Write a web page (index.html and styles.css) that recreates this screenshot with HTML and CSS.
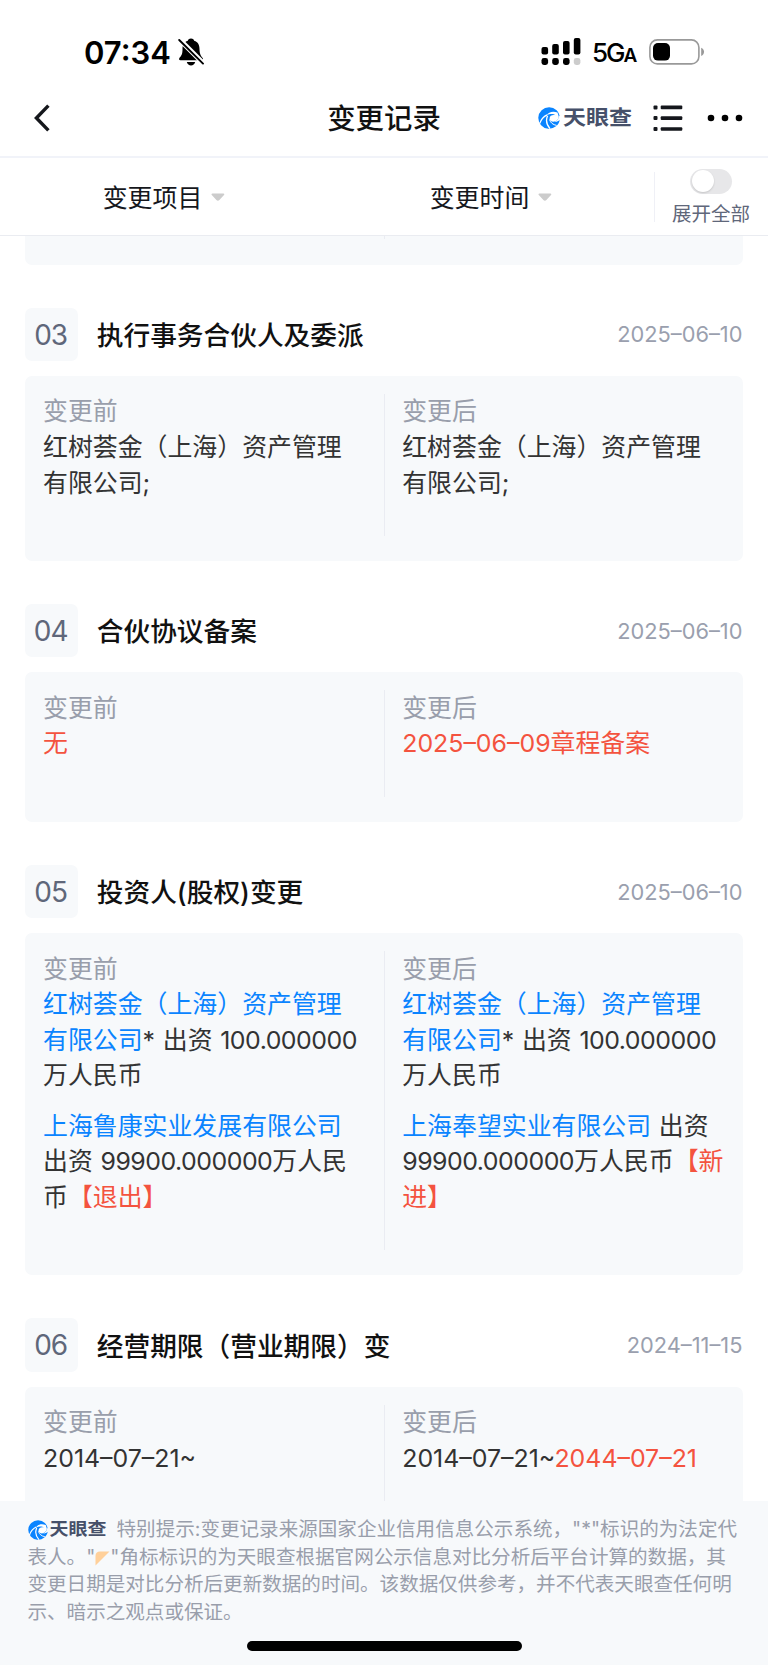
FILE: index.html
```html
<!DOCTYPE html>
<html lang="zh-CN">
<head>
    <meta charset="UTF-8">
    <meta name="viewport" content="width=device-width, initial-scale=1.0">
    <title>变更记录</title>
    <link rel="stylesheet" href="styles.css">
</head>
<body>
    <svg class="defs" width="0" height="0">
        <symbol id="swirl" viewBox="0 0 22 22">
            <path d="M18.6 3.2 A10.8 10.8 0 1 0 18 19.3 C20 17.6 21.4 15.4 21.7 13 C20 14.6 18 15 16.6 14.6 C19.6 13.6 20.8 11.6 20.4 9.4 L21.6 9 C21.2 6.8 20.2 4.8 18.6 3.2 Z" fill="#0a84ff"/>
            <path d="M19.5 5.6 C15 3.8 10.5 5 8.6 8.4 C11.6 6.6 15.6 6.6 17.4 8.2 C14.6 7.4 11.8 8.6 11.6 11.2 C11.4 13.4 13.6 15.2 16.6 14.6 C19.4 13.6 20.8 11.6 20.6 9 Z" fill="#fff"/>
            <path d="M9 7.8 C5.4 9.6 3 12.6 1.6 16.6 M9.6 8.8 C7.8 12.8 8.8 18 12 21.6" fill="none" stroke="#fff" stroke-width="1.3"/>
            <path d="M11.5 12.5 C12.5 15.8 15 17.8 18.6 18.4" fill="none" stroke="#fff" stroke-width="1"/>
        </symbol>
    </svg>

    <div class="page">
        <!-- status bar -->
        <div class="status">
            <div class="status-left">
                <span class="time">07:34</span>
                <svg class="bell" width="26" height="28" viewBox="0 0 26 28">
                    <path d="M13 0.5 C15 0.5 16 1.6 16.2 2.8 C20 4 21.5 7 21.5 11 C21.5 16 23 18 25 20.5 C25 22 24.5 22.3 23.5 22.3 H2.5 C1 22.3 0.7 21 1.5 19.8 C3.5 17.5 4.5 16 4.5 11 C4.5 7 6 4 9.8 2.8 C10 1.6 11 0.5 13 0.5 Z" fill="#000"/>
                    <path d="M8.8 24 H17.2 C16.6 26.2 15 27.4 13 27.4 S9.4 26.2 8.8 24 Z" fill="#000"/>
                    <path d="M1 1 L25.5 25.5" stroke="#fff" stroke-width="5"/>
                    <path d="M1.2 2 L25 25.6" stroke="#000" stroke-width="1.9" stroke-linecap="round"/>
                </svg>
            </div>
            <div class="status-right">
                <svg width="40" height="28" viewBox="0 0 40 28">
                    <rect x="0.5" y="9" width="6.6" height="7.5" rx="2"/>
                    <rect x="11.2" y="6" width="6.6" height="10.5" rx="2"/>
                    <rect x="22" y="3" width="6.6" height="13.5" rx="2"/>
                    <rect x="32.8" y="0" width="6.6" height="16.5" rx="2"/>
                    <rect x="0.5" y="20" width="6.6" height="7" rx="2.4"/>
                    <rect x="11.2" y="20" width="6.6" height="7" rx="2.4"/>
                    <rect x="22" y="20" width="6.6" height="7" rx="2.4"/>
                    <rect x="32.8" y="20" width="6.6" height="7" rx="2.4" fill="#ccc"/>
                </svg>
                <span class="net">5G<small>A</small></span>
                <svg width="56" height="26" viewBox="0 0 56 26">
                    <rect x="0.9" y="0.9" width="49" height="24" rx="7.5" fill="none" stroke="#999" stroke-width="1.6"/>
                    <rect x="4" y="4" width="17" height="17.6" rx="5"/>
                    <path d="M52.2 8.8 C56 10.5 56 15.3 52.2 17 Z" fill="#999"/>
                </svg>
            </div>
        </div>

        <!-- nav -->
        <div class="nav">
            <div class="nav-left">
                <svg width="16" height="28" viewBox="0 0 16 28">
                    <path d="M14.4 1.6 L2.4 14 L14.4 26.4" fill="none" stroke="#15171c" stroke-width="3.4"/>
                </svg>
            </div>
            <h1 class="nav-title">变更记录</h1>
            <div class="nav-right">
                <span class="brand"><svg width="22" height="22"><use href="#swirl"/></svg><b>天眼查</b></span>
                <svg class="menu" width="30" height="28" viewBox="0 0 30 28">
                    <g fill="#15171c">
                        <rect x="0.5" y="1.5" width="4" height="4" rx="1"/>
                        <rect x="0.5" y="12" width="4" height="4" rx="1"/>
                        <rect x="0.5" y="23" width="4" height="4" rx="1"/>
                        <rect x="7.7" y="1.6" width="21.6" height="3.6" rx="1"/>
                        <rect x="7.7" y="12.3" width="21.6" height="3.6" rx="1"/>
                        <rect x="7.7" y="23.2" width="21.6" height="3.6" rx="1"/>
                    </g>
                </svg>
                <svg class="more" width="36" height="8" viewBox="0 0 36 8">
                    <circle cx="4" cy="4" r="3.3"/>
                    <circle cx="18" cy="4" r="3.3"/>
                    <circle cx="32" cy="4" r="3.3"/>
                </svg>
            </div>
        </div>

        <!-- filter -->
        <div class="filter">
            <div class="filter-item"><span>变更项目</span><svg width="14" height="9" viewBox="0 0 14 9"><path d="M1.4 0.6 H12.4 C13.4 0.6 13.6 1.4 13 2 L8.4 7 C7.4 8 6.4 8 5.4 7 L0.8 2 C0.2 1.4 0.5 0.6 1.4 0.6 Z" fill="#ccc"/></svg></div>
            <div class="filter-item"><span>变更时间</span><svg width="14" height="9" viewBox="0 0 14 9"><path d="M1.4 0.6 H12.4 C13.4 0.6 13.6 1.4 13 2 L8.4 7 C7.4 8 6.4 8 5.4 7 L0.8 2 C0.2 1.4 0.5 0.6 1.4 0.6 Z" fill="#ccc"/></svg></div>
            <div class="expand">
                <span class="switch"></span>
                <span>展开全部</span>
            </div>
        </div>

        <!-- list -->
        <div class="list">
            <div class="box box-prev"><div class="col"></div><div class="col"></div></div>

            <div class="item">
                <div class="item-head">
                    <span class="num">03</span>
                    <h2>执行事务合伙人及委派</h2>
                    <span class="date">2025–06–10</span>
                </div>
                <div class="box">
                    <div class="col">
                        <p class="label">变更前</p>
                        <p>红树荟金（上海）资产管理<br>有限公司;</p>
                    </div>
                    <div class="col">
                        <p class="label">变更后</p>
                        <p>红树荟金（上海）资产管理<br>有限公司;</p>
                    </div>
                </div>
            </div>

            <div class="item">
                <div class="item-head">
                    <span class="num">04</span>
                    <h2>合伙协议备案</h2>
                    <span class="date">2025–06–10</span>
                </div>
                <div class="box">
                    <div class="col">
                        <p class="label">变更前</p>
                        <p class="red">无</p>
                    </div>
                    <div class="col">
                        <p class="label">变更后</p>
                        <p class="red"><i class="day">2025–06–09</i>章程备案</p>
                    </div>
                </div>
            </div>

            <div class="item">
                <div class="item-head">
                    <span class="num">05</span>
                    <h2>投资人(股权)变更</h2>
                    <span class="date">2025–06–10</span>
                </div>
                <div class="box">
                    <div class="col">
                        <p class="label">变更前</p>
                        <p><a>红树荟金（上海）资产管理<br>有限公司</a>* 出资 <i>100.000000</i><br>万人民币</p>
                        <p class="next"><a>上海鲁康实业发展有限公司</a><br>出资 <i>99900.000000</i>万人民<br>币<span class="red">【退出】</span></p>
                    </div>
                    <div class="col">
                        <p class="label">变更后</p>
                        <p><a>红树荟金（上海）资产管理<br>有限公司</a>* 出资 <i>100.000000</i><br>万人民币</p>
                        <p class="next"><a>上海奉望实业有限公司</a> 出资<br><i>99900.000000</i>万人民币<span class="red">【新<br>进】</span></p>
                    </div>
                </div>
            </div>

            <div class="item">
                <div class="item-head">
                    <span class="num">06</span>
                    <h2>经营期限（营业期限）变</h2>
                    <span class="date">2024–11–15</span>
                </div>
                <div class="box">
                    <div class="col">
                        <p class="label">变更前</p>
                        <p><i class="day">2014–07–21~</i></p>
                    </div>
                    <div class="col">
                        <p class="label">变更后</p>
                        <p><i class="day">2014–07–21~<span class="red">2044–07–21</span></i></p>
                    </div>
                </div>
            </div>
        </div>

        <!-- tips -->
        <div class="tips">
            <p><span class="brand brand-small"><svg width="20" height="20"><use href="#swirl"/></svg><b>天眼查</b></span>特别提示:变更记录来源国家企业信用信息公示系统，"*"标识的为法定代<br>表人。"<svg class="corner" width="15" height="15" viewBox="0 0 15 15"><path d="M0.5 14.5 V5 Q0.5 0.5 5 0.5 H14.5 Z" fill="#ffd09a"/></svg>"角标标识的为天眼查根据官网公示信息对比分析后平台计算的数据，其<br>变更日期是对比分析后更新数据的时间。该数据仅供参考，并不代表天眼查任何明<br>示、暗示之观点或保证。</p>
            <div class="home-bar"></div>
        </div>
    </div>
</body>
</html>
```
FILE: styles.css
```css
* {
    margin: 0;
    padding: 0;
    box-sizing: border-box;
}

body {
    width: 768px;
    height: 1665px;
    overflow: hidden;
    background: #fff;
    color: #333;
    font-family: "Inter", "Noto Sans CJK SC", sans-serif;
    white-space: nowrap;
}

i {
    font-style: normal;
    letter-spacing: -0.5px;
}

i.day {
    letter-spacing: 0;
}

svg {
    flex-shrink: 0;
}

.defs {
    display: block;
}

.page {
    display: flex;
    flex-direction: column;
    height: 1665px;
}

/* status bar */
.status {
    display: flex;
    justify-content: space-between;
    height: 80px;
    padding: 38px 63px 0 84px;
}

.status-left,
.status-right {
    display: flex;
    align-items: center;
    height: 28px;
    color: #000;
}

.time {
    font-size: 31px;
    font-weight: 600;
    width: 94px;
}

.net {
    width: 57px;
    margin-left: 11px;
    padding-top: 1px;
    font-size: 26px;
    font-weight: 500;
    letter-spacing: -2px;
}

.net small {
    font-size: 19px;
    font-weight: 600;
}

/* nav */
.nav {
    display: flex;
    align-items: center;
    height: 78px;
    padding: 0 25px 0 34px;
    border-bottom: 2px solid #f1f3f9;
}

.nav-left,
.nav-right {
    display: flex;
    flex: 1;
    align-items: center;
}

.nav-left {
    margin-right: -9px;
}

.nav-right {
    justify-content: flex-end;
}

.nav-title {
    padding-bottom: 3px;
    font-size: 28.4px;
    font-weight: 500;
    color: #111;
}

.brand {
    display: inline-flex;
    align-items: center;
    gap: 3px;
    color: #465069;
}

.brand b {
    font-size: 23px;
    line-height: 26px;
    font-weight: 700;
    transform: scaleY(0.9);
}

.menu {
    margin: 0 24px 0 21px;
}

/* filter */
.filter {
    display: flex;
    align-items: center;
    height: 78px;
    border-bottom: 1px solid #eaecf1;
}

.filter-item {
    display: flex;
    flex: 1;
    align-items: center;
    justify-content: center;
    gap: 9px;
    padding-left: 1px;
    font-size: 24.9px;
    color: #15171c;
}

.filter-item span {
    padding-bottom: 2px;
}

.filter-item svg {
    margin-top: 1px;
}

.expand {
    display: flex;
    flex-direction: column;
    align-items: center;
    justify-content: center;
    gap: 6px;
    width: 114px;
    height: 50px;
    padding: 3px 1px 0 0;
    border-left: 1px solid #eff0f6;
    font-size: 19.5px;
    line-height: 28px;
    color: #5f677a;
}

.switch {
    width: 42px;
    height: 25px;
    padding: 1.5px;
    border-radius: 13px;
    background: #e7e7e9;
}

.switch::before {
    content: "";
    display: block;
    width: 22px;
    height: 22px;
    border-radius: 50%;
    background: #fff;
    box-shadow: 0 1px 2px rgba(0, 0, 0, 0.15);
}

/* list */
.list {
    height: 1265px;
    padding: 0 25.5px 0 25px;
    overflow: hidden;
}

.item {
    margin-top: 43px;
}

.item-head {
    display: flex;
    align-items: center;
    height: 53.4px;
    margin-bottom: 14.8px;
}

.num {
    width: 53.3px;
    height: 53.3px;
    border-radius: 7px;
    background: #f7f9fb;
    font-size: 28px;
    line-height: 54px;
    text-align: center;
    color: #5f677a;
    letter-spacing: -1px;
    text-indent: -2px;
}

.item-head h2 {
    flex: 1;
    margin-left: 18.5px;
    padding-bottom: 2px;
    font-size: 26.7px;
    font-weight: 500;
    color: #111;
}

.date {
    font-size: 21.8px;
    color: #9a9fae;
}

.box {
    display: flex;
    padding: 18px 0 25.2px;
    border-radius: 7px;
    background: #f7f9fb;
}

.box-prev {
    height: 28.8px;
    padding-top: 0;
    border-radius: 0 0 7px 7px;
}

.col {
    flex: 1;
    padding: 0.5px 0 34.5px 18px;
    font-size: 24.9px;
    line-height: 35.65px;
    word-spacing: 0.7px;
}

.col + .col {
    flex: 0 0 358.8px;
    padding-left: 17.5px;
    border-left: 1px solid #eaecf2;
}

.box-prev .col {
    height: 3px;
    padding: 0;
}

.label {
    color: #999eab;
}

.next {
    margin-top: 14.6px;
}

.red {
    color: #f4533f;
}

a {
    color: #0a84ff;
}

/* tips */
.tips {
    flex: 1;
    padding: 15px 27.5px 0;
    background: #f7f9fb;
    font-size: 19.57px;
    line-height: 27.6px;
    color: #999eab;
}

.brand-small {
    gap: 2px;
    height: 20px;
    margin-right: 10px;
    vertical-align: -4px;
}

.brand-small b {
    font-size: 19px;
}

.corner {
    vertical-align: -2px;
}

.home-bar {
    width: 275px;
    height: 9.5px;
    margin: 15px auto 0;
    border-radius: 5px;
    background: #000;
}
```
